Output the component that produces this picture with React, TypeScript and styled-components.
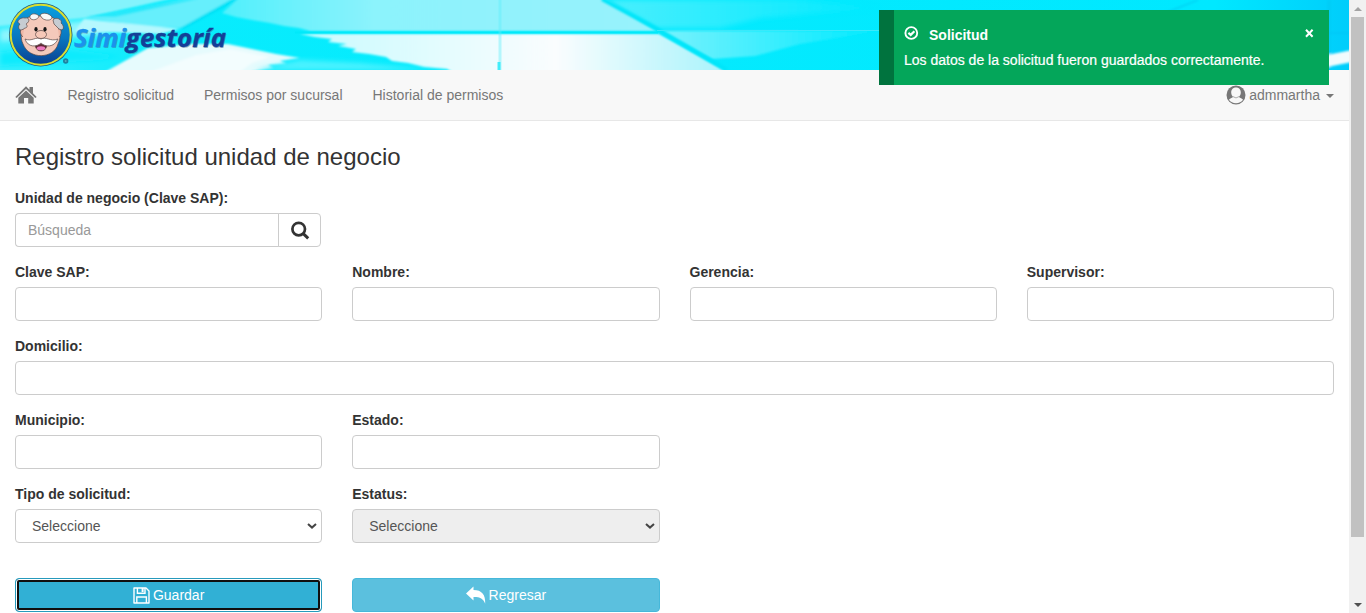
import React from "react";
import styled, { createGlobalStyle, css } from "styled-components";

const GlobalStyle = createGlobalStyle`
  *, *::before, *::after { box-sizing: border-box; }
  html, body { margin: 0; padding: 0; }
  body {
    font-family: "Liberation Sans", Arial, Helvetica, sans-serif;
    font-size: 14px;
    line-height: 20px;
    color: #333;
    background: #fff;
  }
`;

const Screen = styled.div`
  position: relative;
  display: flex;
  width: 100%;
  height: 613px;
  overflow: hidden;
`;

const Page = styled.div`
  flex: 1;
  min-width: 0;
`;

const Banner = styled.header`
  height: 70px;
  overflow: hidden;
  svg { display: block; }
`;

const Navbar = styled.nav`
  display: flex;
  align-items: center;
  height: 51px;
  padding: 0 15px;
  background: #f8f8f8;
  border-bottom: 1px solid #e7e7e7;
`;

const NavLink = styled.a`
  padding: 0 15px;
  color: #777;
`;

const HomeLink = styled.a`
  display: flex;
  width: 37.4px;
  svg { display: block; }
`;

const UserMenu = styled.a`
  display: flex;
  align-items: center;
  margin-left: auto;
  color: #777;
  svg { margin-right: 3px; }
`;

const Caret = styled.span`
  margin: 2px 0 0 6px;
  border-top: 4px solid #777;
  border-left: 4px solid transparent;
  border-right: 4px solid transparent;
`;

const Content = styled.main`
  padding: 23px 15px 0;
`;

const Title = styled.h3`
  margin: 0 0 18px;
  font-size: 24px;
  line-height: 26px;
  font-weight: 400;
`;

const Grid = styled.div`
  display: grid;
  grid-template-columns: repeat(4, 1fr);
  column-gap: 30px;
  row-gap: 15px;
`;

const Field = styled.div<{ $row?: boolean }>`
  min-width: 0;
  ${(p) => p.$row && css`grid-column: 1 / -1;`}
`;

const Label = styled.label`
  display: block;
  margin-bottom: 5px;
  font-weight: 700;
  white-space: nowrap;
`;

const control = css`
  display: block;
  width: 100%;
  height: 34px;
  padding: 6px 12px;
  margin: 0;
  border: 1px solid #ccc;
  border-radius: 4px;
  background-color: #fff;
  color: #555;
  font: 14px/20px "Liberation Sans", Arial, sans-serif;
`;

const Input = styled.input`
  ${control}
  &::placeholder { color: #999; opacity: 1; }
`;

const SelectBox = styled.div`
  display: grid;
  align-items: center;
  > * { grid-area: 1 / 1; }
  > svg {
    justify-self: end;
    margin-right: 5px;
    pointer-events: none;
  }
`;

const Select = styled.select`
  ${control}
  padding-left: 16px;
  appearance: none;
  &:disabled { background-color: #eee; opacity: 1; }
`;

const SearchGroup = styled.div`
  display: flex;
  width: 306px;
  ${Input} {
    width: 264px;
    border-right: 0;
    border-radius: 4px 0 0 4px;
  }
`;

const SearchButton = styled.button`
  display: flex;
  align-items: center;
  justify-content: center;
  width: 43px;
  height: 34px;
  margin-left: -1px;
  padding: 0;
  border: 1px solid #ccc;
  border-radius: 0 4px 4px 0;
  background: #fff;
`;

const Actions = styled(Grid)`
  margin-top: 35px;
`;

const ActionButton = styled.button<{ $focused?: boolean }>`
  display: flex;
  align-items: center;
  justify-content: center;
  gap: 3px;
  height: 34px;
  padding: 0;
  border: 1px solid #46b8da;
  border-radius: 4px;
  background: #5bc0de;
  color: #fff;
  font: 14px/20px "Liberation Sans", Arial, sans-serif;
  ${(p) => p.$focused && css`
    border-color: #269abc;
    background: #31b0d5;
    box-shadow: inset 0 0 0 1px #fff, inset 0 0 0 3px #101010;
  `}
`;

const Toast = styled.div`
  position: absolute;
  top: 10px;
  left: 879px;
  width: 450px;
  height: 75px;
  padding: 15px 15px 0 10px;
  border-left: 15px solid #00733e;
  background: #04a65a;
  color: #fff;
`;

const ToastHead = styled.div`
  display: flex;
  align-items: flex-start;
  height: 25px;
  svg { flex: none; }
`;

const ToastTitle = styled.strong`
  margin-left: 10px;
  line-height: 20px;
`;

const ToastClose = styled.span`
  display: flex;
  margin: 4px 0 0 auto;
`;

const ToastText = styled.div`
  -webkit-text-stroke: 0.2px #fff;
`;

const Scrollbar = styled.div`
  display: flex;
  flex-direction: column;
  align-items: center;
  width: 17px;
  height: 613px;
  background: #f1f1f1;
`;

const ScrollArrow = styled.div<{ $down?: boolean }>`
  display: flex;
  align-items: center;
  justify-content: center;
  height: 17px;
  margin-top: ${(p) => (p.$down ? "auto" : 0)};
`;

const Thumb = styled.div`
  width: 13px;
  height: 520px;
  background: #c1c1c1;
`;

const BannerArt = () => (
  <svg width="1349" height="70" viewBox="0 0 1349 70" role="img" aria-label="Simigestoría">
    <defs>
      <linearGradient id="base" x1="0" x2="1">
        <stop offset="0" stopColor="#38effd" />
        <stop offset="0.12" stopColor="#08ecfd" />
        <stop offset="0.9" stopColor="#00e8ff" />
        <stop offset="1" stopColor="#00cdfb" />
      </linearGradient>
      <linearGradient id="sky" x1="0" x2="1">
        <stop offset="0" stopColor="#50f0fc" />
        <stop offset="0.35" stopColor="#8cf3fc" />
        <stop offset="1" stopColor="#98f2fc" />
      </linearGradient>
      <linearGradient id="cloud" x1="0" x2="1">
        <stop offset="0" stopColor="#c8fbfe" />
        <stop offset="0.6" stopColor="#fafdfe" />
        <stop offset="1" stopColor="#a8f3fc" />
      </linearGradient>
      <linearGradient id="fade" x1="0" x2="1">
        <stop offset="0" stopColor="#78f2fd" />
        <stop offset="1" stopColor="#00eaff" />
      </linearGradient>
      <linearGradient id="medal" x1="0" y1="0" x2="0" y2="1">
        <stop offset="0" stopColor="#0a9fe0" />
        <stop offset="0.55" stopColor="#0877c0" />
        <stop offset="1" stopColor="#0a3f90" />
      </linearGradient>
      <filter id="soft" x="-5%" y="-20%" width="110%" height="140%">
        <feGaussianBlur stdDeviation="0.8" />
      </filter>
      <filter id="mist" x="-10%" y="-40%" width="120%" height="180%">
        <feGaussianBlur stdDeviation="2.5" />
      </filter>
    </defs>
    <rect width="1349" height="70" fill="url(#base)" />

    <path d="M-5 -5H188L85 18L0 26L-5 27Z" fill="#84f3fc" filter="url(#soft)" />
    <g filter="url(#mist)">
      <path d="M0 30L90 20L110 34L0 42Z" fill="#8cf5fd" />
      <path d="M0 52L60 48L120 56L100 60L0 66Z" fill="#10ebfd" />
    </g>
    <g filter="url(#soft)">
      <path d="M88 18L190 -2H234L182 28L150 27Z" fill="#66effc" />
      <path d="M87 17L190 -1H198L115 17Z" fill="#28e9fb" />
      <path d="M180 28L232 -1H240L184 29Z" fill="#00e1f6" />
      <path d="M84 19L180 29L160 34L75 31Z" fill="#b5f8fe" />
      <path d="M239 -2H603L657 31H310L299 28L284 26L270 23L252 20L236 17L222 13Z" fill="url(#sky)" />
      <path d="M300 34H659L727 72H452L447 69L424 67L408 63L392 61L386 57L369 54L352 52L356 49L338 46L347 44L328 42L332 39L315 37Z" fill="url(#cloud)" />
      <path d="M105 72L148 48L190 44L228 44L252 49L276 54L300 58L280 61L287 64L268 65L274 68L250 72Z" fill="#e6fbfd" />
      <path d="M150 72L196 55L230 49L270 57L252 63L240 72Z" fill="#f7fdfe" opacity="0.75" />
    </g>
    <path d="M255 70L300 60L360 63L430 70Z" fill="#4cf2ff" filter="url(#mist)" />
    <path d="M295 32.5H658" stroke="#00e9fa" strokeWidth="2" />
    <path d="M500 0V70" stroke="#5ceefb" strokeWidth="3" opacity="0.4" />
    <path d="M499 62V70" stroke="#20ebfa" strokeWidth="3" opacity="0.8" />
    <path d="M606 0H800L880 8L760 18L720 28L657 28Z" fill="url(#fade)" filter="url(#mist)" opacity="0.6" />
    <path d="M660 31H879L800 44L755 56L712 59Z" fill="url(#fade)" filter="url(#soft)" />
    <path d="M602 -1L657 29L727 70" fill="none" stroke="#00e5f9" strokeWidth="4" filter="url(#soft)" />
    <path d="M657 30.5H890" stroke="#3be9fa" strokeWidth="1" />
    <g filter="url(#soft)">
      <path d="M1170 12L1200 0H1196L1160 14Z" fill="#00d3f4" />
      <path d="M1327 0H1331V70H1327Z" fill="#00cdf7" />
      <path d="M1329 32.5H1349V33.5H1329Z" fill="#00c3f5" />
      <path d="M1322 56L1352 50V62L1322 68Z" fill="#f2fbfd" />
    </g>

    <circle cx="40.7" cy="34.7" r="31.8" fill="#195d86" />
    <circle cx="40.7" cy="34.7" r="30" fill="url(#medal)" stroke="#d9df32" strokeWidth="2" />
    <g stroke="#574746" strokeWidth="0.7">
      <path d="M24 23C26 16 33 15 40 16C48 15 56 17 58 24C61 30 61 38 58 44C54 59 29 60 23 44C20 38 21 29 24 23Z" fill="#f4c9bb" />
      <path d="M24 29C20 26 19 34 23 37M58 29C62 27 62 35 59 37" fill="#efb8a7" />
      <path d="M25 28C19 33 17 27 20 24C15 22 20 17 25 18C30 17 30 22 26 24C28 26 27 28 25 28Z" fill="#c6ccd2" />
      <path d="M53 20C56 16 63 20 61 23C65 26 64 32 59 29L54 24Z" fill="#c6ccd2" />
      <path d="M30 18C29 14 35 12 39 16C38 20 32 21 30 18ZM40 15C43 12 49 13 52 17C52 21 45 21 42 18Z" fill="#f7f8f8" />
      <path d="M35 45Q41 43 47 45Q46 51 41 51Q36 51 35 45Z" fill="#632633" />
      <ellipse cx="41" cy="48.2" rx="4.2" ry="2" fill="#ed79c0" stroke="none" />
      <path d="M41 39C36 36 32 42 25 39C28 48 37 47 41 43C45 47 54 48 58 39C50 42 46 36 41 39Z" fill="#fff" />
      <ellipse cx="41" cy="34.5" rx="5.5" ry="4" fill="#f7c8b8" />
    </g>
    <ellipse cx="36" cy="29.3" rx="1.6" ry="2.2" fill="#161616" />
    <ellipse cx="45" cy="29.3" rx="1.6" ry="2.2" fill="#161616" />
    <circle cx="65.7" cy="61" r="2.7" fill="#1c82a0" />
    <circle cx="65.7" cy="61" r="1" fill="#55a9bd" />

    <g fontFamily='"Open Sans", "Noto Sans", sans-serif' fontWeight="700" fontStyle="italic" fontSize="25.5" strokeWidth="0.3">
      <g fill="#47607b" opacity="0.4" transform="translate(0.8 1.2)">
        <text x="74" y="46.5" textLength="52" lengthAdjust="spacingAndGlyphs" aria-hidden="true">Simi</text>
        <text x="126" y="46.5" textLength="100" lengthAdjust="spacingAndGlyphs" aria-hidden="true">gestoría</text>
      </g>
      <text x="74" y="46.5" textLength="52" lengthAdjust="spacingAndGlyphs" fill="#1c91ed" stroke="#1c91ed">Simi</text>
      <text x="126" y="46.5" textLength="100" lengthAdjust="spacingAndGlyphs" fill="#143f98" stroke="#143f98">gestoría</text>
    </g>
  </svg>
);

const HomeIcon = () => (
  <svg width="22" height="18" viewBox="0 0 22 18" fill="#777">
    <path d="M11 0.3L14.5 3.8V1H18V7.2L21.7 11L20.3 12L11 3L1.7 12L0.3 11Z" />
    <path d="M11 4.4L18.7 11.8V17.5H13.2V12H9V17.5H3.3V11.8Z" />
  </svg>
);

const UserIcon = () => (
  <svg width="20" height="20" viewBox="0 0 20 20">
    <circle cx="10" cy="10" r="9.5" fill="#777" />
    <path d="M10 2.6C6.8 2.6 5.2 4.9 5.2 7.5C5.2 9.4 6 10.8 7 11.8C6.8 13 4.2 13.2 2.9 14.8C6 19.4 14 19.4 17.1 14.8C15.8 13.2 13.2 13 13 11.8C14 10.8 14.8 9.4 14.8 7.5C14.8 4.9 13.2 2.6 10 2.6Z" fill="#f8f8f8" />
    <path d="M6.8 11.5Q10 14.4 13.2 11.5" fill="none" stroke="#999" strokeWidth="0.8" />
  </svg>
);

const SearchIcon = () => (
  <svg width="20" height="20" viewBox="0 0 20 20" fill="none" stroke="#333">
    <circle cx="8.7" cy="9.1" r="6.3" strokeWidth="2.7" />
    <path d="M13 13.4L18.2 18.3" strokeWidth="3" />
  </svg>
);

const ChevronIcon = () => (
  <svg width="10" height="6" viewBox="0 0 10 6" fill="none" stroke="#444" strokeWidth="2">
    <path d="M1 0.9L5 4.6L9 0.9" />
  </svg>
);

const CheckIcon = () => (
  <svg width="15" height="15" viewBox="0 0 15 15" fill="none" stroke="#fff">
    <circle cx="7.3" cy="8" r="5.9" strokeWidth="1.9" />
    <path d="M4.4 7.9L6.7 9.9L10.4 6.2" strokeWidth="2.2" />
  </svg>
);

const CloseIcon = () => (
  <svg width="9" height="9" viewBox="0 0 9 9" stroke="#fff" strokeWidth="2">
    <path d="M1 0.8L7.6 7.8M7.6 0.8L1 7.8" />
  </svg>
);

const SaveIcon = () => (
  <svg width="17" height="17" viewBox="0 0 17 17" fill="none" stroke="#fff" strokeWidth="1.4">
    <path d="M1 1H13L16 4V16H1Z" strokeLinejoin="round" />
    <path d="M4.4 1V6.2H12V1M3.8 16V10H13.4V16" />
    <path d="M9.6 1V5" strokeWidth="2" />
  </svg>
);

const ReturnIcon = () => (
  <svg width="20" height="18" viewBox="0 0 20 18" fill="#fff">
    <path d="M7.5 0.5V4C15.8 4 19.6 8.5 19.2 17.7C17.2 12.6 14 10.9 7.5 11V14.6L0 7.4Z" />
  </svg>
);

interface TextFieldProps {
  label: string;
  row?: boolean;
}

const TextField = ({ label, row }: TextFieldProps) => (
  <Field $row={row}>
    <Label>{label}</Label>
    <Input aria-label={label} />
  </Field>
);

const SelectField = ({ label, disabled }: { label: string; disabled?: boolean }) => (
  <Field>
    <Label>{label}</Label>
    <SelectBox>
      <Select aria-label={label} disabled={disabled}>
        <option>Seleccione</option>
      </Select>
      <ChevronIcon />
    </SelectBox>
  </Field>
);

const SplitGrid = styled(Grid)`
  margin-top: 15px;
`;

export default function App() {
  return (
    <>
      <GlobalStyle />
      <Screen>
        <Page>
          <Banner>
            <BannerArt />
          </Banner>
          <Navbar>
            <HomeLink><HomeIcon /></HomeLink>
            <NavLink>Registro solicitud</NavLink>
            <NavLink>Permisos por sucursal</NavLink>
            <NavLink>Historial de permisos</NavLink>
            <UserMenu><UserIcon />admmartha<Caret /></UserMenu>
          </Navbar>
          <Content>
            <Title>Registro solicitud unidad de negocio</Title>
            <Grid>
              <Field $row>
                <Label>Unidad de negocio (Clave SAP):</Label>
                <SearchGroup>
                  <Input placeholder="Búsqueda" />
                  <SearchButton aria-label="Buscar"><SearchIcon /></SearchButton>
                </SearchGroup>
              </Field>
              <TextField label="Clave SAP:" />
              <TextField label="Nombre:" />
              <TextField label="Gerencia:" />
              <TextField label="Supervisor:" />
              <TextField label="Domicilio:" row />
              <TextField label="Municipio:" />
              <TextField label="Estado:" />
            </Grid>
            <SplitGrid>
              <SelectField label="Tipo de solicitud:" />
              <SelectField label="Estatus:" disabled />
            </SplitGrid>
            <Actions>
              <ActionButton $focused><SaveIcon />Guardar</ActionButton>
              <ActionButton><ReturnIcon />Regresar</ActionButton>
            </Actions>
          </Content>
        </Page>
        <Scrollbar>
          <ScrollArrow>
            <svg width="8" height="4" viewBox="0 0 8 4"><path d="M0 4L4 0L8 4Z" fill="#a3a3a3" /></svg>
          </ScrollArrow>
          <Thumb />
          <ScrollArrow $down>
            <svg width="8" height="4" viewBox="0 0 8 4"><path d="M0 0L4 4L8 0Z" fill="#505050" /></svg>
          </ScrollArrow>
        </Scrollbar>
        <Toast>
          <ToastHead>
            <CheckIcon />
            <ToastTitle>Solicitud</ToastTitle>
            <ToastClose><CloseIcon /></ToastClose>
          </ToastHead>
          <ToastText>Los datos de la solicitud fueron guardados correctamente.</ToastText>
        </Toast>
      </Screen>
    </>
  );
}
